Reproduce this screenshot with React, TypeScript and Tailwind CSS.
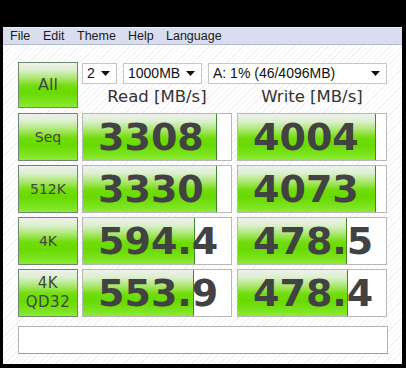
import React from 'react';

type Row = {
  label: string[];
  read: string;
  write: string;
  readBar: string;
  writeBar: string;
};

const rows: Row[] = [
  { label: ['Seq'], read: '3308', write: '4004', readBar: 'w-[134px]', writeBar: 'w-[138px]' },
  { label: ['512K'], read: '3330', write: '4073', readBar: 'w-[134px]', writeBar: 'w-[138px]' },
  { label: ['4K'], read: '594.4', write: '478.5', readBar: 'w-[112px]', writeBar: 'w-[109px]' },
  { label: ['4K', 'QD32'], read: '553.9', write: '478.4', readBar: 'w-[111px]', writeBar: 'w-[110px]' },
];

const green =
  'bg-[linear-gradient(to_bottom,#eef1ec_0%,#dcefcf_16%,#a6e666_36%,#72dd0c_52%,#68da00_68%,#7ce41e_88%,#8eea38_100%)]';

function TestButton({ lines, size = 'text-[14px]', className = '' }: { lines: string[]; size?: string; className?: string }) {
  return (
    <div
      className={`flex w-[60px] shrink-0 flex-col items-center justify-center border border-[#6f8670] text-[#454545] ${green} ${className}`}
    >
      {lines.map((l) => (
        <span key={l} className={lines.length > 1 ? 'text-[15px] leading-[19px] tracking-[0.5px]' : `${size} leading-none`}>
          {l}
        </span>
      ))}
    </div>
  );
}

function ResultBox({ value, bar }: { value: string; bar: string }) {
  return (
    <div className="relative flex h-full w-[150px] shrink-0 items-center border border-[#b8b8b8] bg-white">
      <div className={`absolute left-0 top-0 bottom-0 border-r border-[#3d8a28] ${green} ${bar}`} />
      <span className="relative pl-[15px] text-[38px] font-bold leading-none text-[#424242]">{value}</span>
    </div>
  );
}

function Select({ text, w }: { text: string; w: string }) {
  return (
    <div className={`flex h-[21px] items-center justify-between border border-[#c6c6c6] bg-white pl-[4px] pr-[6px] text-[14px] text-[#111] ${w}`}>
      <span className="font-['Liberation_Sans',sans-serif]">{text}</span>
      <svg width="9" height="5" viewBox="0 0 9 5">
        <path d="M0 0h9L4.5 5z" fill="#111" />
      </svg>
    </div>
  );
}

export default function App() {
  return (
    <div className="h-[368px] w-[406px] bg-black pl-[3px] pt-[27px] font-['DejaVu_Sans',sans-serif]">
      <div className="h-[337px] w-[399px] bg-[repeating-linear-gradient(135deg,#ffffff_0px,#ffffff_3px,#f2f2f2_3px,#f2f2f2_4px)]">
        {/* Menu */}
        <div className="flex h-[18px] items-center border-t border-[#eef0f8] border-b border-b-[#b4bace] bg-[#d9deef] pl-[7px] font-['Liberation_Sans',sans-serif] text-[12.5px] text-[#1a1a1a]">
          <span className="w-[33px]">File</span>
          <span className="w-[34px]">Edit</span>
          <span className="w-[51px]">Theme</span>
          <span className="w-[38px]">Help</span>
          <span>Language</span>
        </div>

        <div className="flex flex-col pl-[15px] pt-[17px]">
          {/* Top row */}
          <div className="flex h-[46px]">
            <TestButton lines={['All']} size="text-[16px]" className="h-[46px]" />
            <div className="ml-[4px] flex flex-col">
              <div className="mt-[1px] flex gap-[6px]">
                <Select text="2" w="w-[35px]" />
                <Select text="1000MB" w="w-[79px]" />
                <Select text="A: 1% (46/4096MB)" w="w-[179px]" />
              </div>
              <div className="mt-[5px] flex gap-[5px] text-[16.5px] leading-none text-[#333]">
                <span className="w-[150px] text-center">Read [MB/s]</span>
                <span className="w-[150px] text-center">Write [MB/s]</span>
              </div>
            </div>
          </div>

          {/* Results */}
          <div className="mt-[5px] flex flex-col gap-[4px]">
            {rows.map((r) => (
              <div key={r.read + r.write} className="flex h-[48px] gap-[4px]">
                <TestButton lines={r.label} />
                <ResultBox value={r.read} bar={r.readBar} />
                <div className="ml-[1px] h-full">
                  <ResultBox value={r.write} bar={r.writeBar} />
                </div>
              </div>
            ))}
          </div>

          {/* Comment box */}
          <div className="mt-[9px] h-[28px] w-[370px] border border-[#b0b0b8] border-b-[#9c9ca4] bg-white" />
        </div>
      </div>
    </div>
  );
}
